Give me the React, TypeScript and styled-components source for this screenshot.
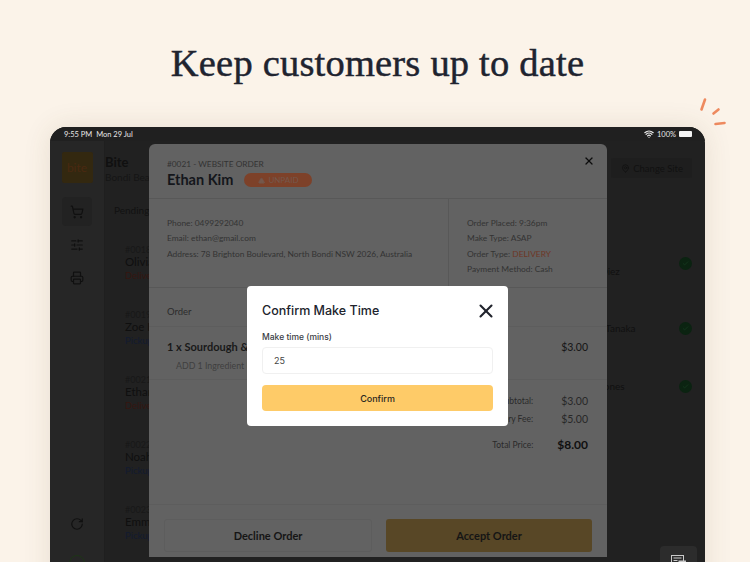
import React from 'react';
import styled, { createGlobalStyle } from 'styled-components';
import { Check, MapPin, Printer, RotateCw, ShoppingCart, SlidersHorizontal, TriangleAlert, Wifi, X } from 'lucide-react';

const GlobalStyle = createGlobalStyle`
	html, body {
		margin: 0;
		height: 100%;
		overflow: hidden;
		background: #fbf3e9;
	}
	* {
		box-sizing: border-box;
	}
`;

const pendingOrders = [
	{ id: '#0018', name: 'Olivia Hart', type: 'Delivery' },
	{ id: '#0019', name: 'Zoe Lang', type: 'Pickup' },
	{ id: '#0021', name: 'Ethan Kim', type: 'Delivery' },
	{ id: '#0022', name: 'Noah Reed', type: 'Pickup' },
	{ id: '#0023', name: 'Emma Cole', type: 'Pickup' },
];

const doneOrders = ['Mia Diez', 'Kenji Tanaka', 'Ava Jones'];

const App: React.FC = () => {
	return (
		<Page>
			<GlobalStyle />
			<Headline>Keep customers up to date</Headline>
			<Sparks width='30' height='32' viewBox='0 0 30 32'>
				<path d='M3.5 12.5 L7 2.5' />
				<path d='M15.5 16.5 L20.5 12.5' />
				<path d='M17.5 27 L26.5 26' />
			</Sparks>
			<Tablet>
				<StatusBar>
					<span>9:55 PM&nbsp;&nbsp;Mon 29 Jul</span>
					<StatusRight>
						<Wifi size={10} strokeWidth={3} />
						<span>100%</span>
						<Battery />
					</StatusRight>
				</StatusBar>
				<AppBody>
					<Sidebar>
						<Logo>bite</Logo>
						<SideButton $active>
							<ShoppingCart size={14} />
						</SideButton>
						<SideButton>
							<SlidersHorizontal size={14} />
						</SideButton>
						<SideButton>
							<Printer size={14} />
						</SideButton>
						<SideSpacer />
						<SideButton>
							<RotateCw size={14} />
						</SideButton>
						<GreenRing />
					</Sidebar>
					<Main>
						<TopBar>
							<div>
								<SiteName>Bite</SiteName>
								<SiteArea>Bondi Beach</SiteArea>
							</div>
							<ChangeSite>
								<MapPin size={9} />
								Change Site
							</ChangeSite>
						</TopBar>
						<Tab>Pending</Tab>
						<Columns>
							<OrderList>
								{pendingOrders.map((order) => (
									<OrderRow key={order.id}>
										<OrderId>{order.id}</OrderId>
										<OrderName>{order.name}</OrderName>
										<OrderType $delivery={order.type === 'Delivery'}>{order.type}</OrderType>
									</OrderRow>
								))}
							</OrderList>
							<DoneList>
								{doneOrders.map((name, index) => (
									<DoneRow key={name} $low={index === 0}>
										<span>{name}</span>
										<DoneMark>
											<Check size={7} />
										</DoneMark>
									</DoneRow>
								))}
							</DoneList>
						</Columns>
					</Main>
				</AppBody>
				<BottomBand />
				<Sheet>
					<SheetHeader>
						<SheetKicker>#0021 - WEBSITE ORDER</SheetKicker>
						<SheetTitleRow>
							<SheetTitle>Ethan Kim</SheetTitle>
							<UnpaidBadge>
								<TriangleAlert size={7} fill='#75584c' />
								UNPAID
							</UnpaidBadge>
						</SheetTitleRow>
						<SheetClose>
							<X size={12} strokeWidth={2.5} />
						</SheetClose>
					</SheetHeader>
					<InfoGrid>
						<InfoColumn>
							<InfoLine>Phone: 0499292040</InfoLine>
							<InfoLine>Email: ethan@gmail.com</InfoLine>
							<InfoLine>Address: 78 Brighton Boulevard, North Bondi NSW 2026, Australia</InfoLine>
						</InfoColumn>
						<InfoColumn>
							<InfoLine>Order Placed: 9:36pm</InfoLine>
							<InfoLine>Make Type: ASAP</InfoLine>
							<InfoLine>
								Order Type: <DeliveryText>DELIVERY</DeliveryText>
							</InfoLine>
							<InfoLine>Payment Method: Cash</InfoLine>
						</InfoColumn>
					</InfoGrid>
					<OrderHeading>Order</OrderHeading>
					<ItemBlock>
						<ItemRow>
							<ItemName>1 x Sourdough &amp; Avocado</ItemName>
							<Price>$3.00</Price>
						</ItemRow>
						<ItemExtra>ADD 1 Ingredient Egg</ItemExtra>
					</ItemBlock>
					<Totals>
						<TotalRow>
							<TotalLabel>Subtotal:</TotalLabel>
							<TotalValue>$3.00</TotalValue>
						</TotalRow>
						<TotalRow>
							<TotalLabel>Delivery Fee:</TotalLabel>
							<TotalValue>$5.00</TotalValue>
						</TotalRow>
						<GrandRow>
							<TotalLabel>Total Price:</TotalLabel>
							<GrandValue>$8.00</GrandValue>
						</GrandRow>
					</Totals>
					<SheetFooter>
						<DeclineButton>Decline Order</DeclineButton>
						<AcceptButton>Accept Order</AcceptButton>
					</SheetFooter>
				</Sheet>
				<Dialog>
					<DialogHeader>
						<DialogTitle>Confirm Make Time</DialogTitle>
						<X size={22} strokeWidth={2.3} color='#20232c' />
					</DialogHeader>
					<FieldLabel>Make time (mins)</FieldLabel>
					<Field>25</Field>
					<ConfirmButton>Confirm</ConfirmButton>
				</Dialog>
				<SupportButton>
					<svg width='15' height='12' viewBox='0 0 15 12' fill='none' stroke='#c9c9c9' strokeWidth='1'>
						<rect x='0.5' y='0.5' width='12' height='10' />
						<path d='M2.5 3h8M2.5 5.5h4M2.5 8h4' />
						<rect x='8' y='6' width='6.5' height='5.5' fill='#c9c9c9' />
					</svg>
				</SupportButton>
			</Tablet>
		</Page>
	);
};

const Page = styled.div`
	position: relative;
	width: 750px;
	height: 562px;
	overflow: hidden;
	padding: 41px 45px 0 50px;
	background: #fbf3e9;
`;

const Headline = styled.h1`
	margin: 0 0 41px;
	height: 45px;
	font-family: 'Liberation Serif', serif;
	font-size: 38.5px;
	line-height: 45px;
	font-weight: 400;
	letter-spacing: 0.2px;
	text-align: center;
	color: #20232f;
	-webkit-text-stroke: 0.45px #20232f;
`;

const Sparks = styled.svg`
	position: absolute;
	left: 698px;
	top: 97px;
	fill: none;
	stroke: #ee8a5f;
	stroke-width: 2.6;
	stroke-linecap: round;
`;

const Tablet = styled.div`
	position: relative;
	height: 470px;
	border-radius: 16px 16px 0 0;
	overflow: hidden;
	background: #212121;
	box-shadow: 0 0 28px rgba(90, 70, 40, 0.12);
	font-family: Lato, 'Liberation Sans', sans-serif;
`;

const StatusBar = styled.div`
	display: flex;
	align-items: center;
	justify-content: space-between;
	height: 14px;
	padding: 0 13px 0 14px;
	background: #202020;
	font-size: 7.5px;
	color: #e6e6e6;
`;

const StatusRight = styled.div`
	display: flex;
	align-items: center;
	gap: 3px;
`;

const Battery = styled.div`
	width: 13px;
	height: 6px;
	border-radius: 1px;
	background: #f4f4f4;
`;

const AppBody = styled.div`
	display: flex;
	height: 430px;
`;

const Sidebar = styled.div`
	display: flex;
	flex: none;
	flex-direction: column;
	align-items: center;
	width: 55px;
	padding: 11px 0 0;
	background: #262626;
	border-right: 1px solid #1f1f1f;
`;

const Logo = styled.div`
	display: flex;
	align-items: center;
	justify-content: center;
	width: 31px;
	height: 31px;
	margin-bottom: 14px;
	border-radius: 2px;
	background: #332810;
	font-size: 12px;
	color: #4a2810;
`;

const SideButton = styled.div<{ $active?: boolean }>`
	display: flex;
	align-items: center;
	justify-content: center;
	width: 30px;
	height: 29px;
	margin-bottom: 4px;
	border-radius: 4px;
	background: ${({ $active }) => ($active ? '#222' : 'transparent')};
	color: #101010;
`;

const SideSpacer = styled.div`
	flex: 1;
`;

const GreenRing = styled.div`
	flex: none;
	width: 16px;
	height: 16px;
	margin-top: 13px;
	border: 1px solid #1e3517;
	border-radius: 50%;
`;

const Main = styled.div`
	flex: 1;
	min-width: 0;
	overflow: hidden;
`;

const TopBar = styled.div`
	display: flex;
	align-items: flex-start;
	justify-content: space-between;
	height: 56px;
	padding: 14px 13px 0 0;
`;

const SiteName = styled.div`
	font-size: 13px;
	font-weight: 700;
	line-height: 15px;
	color: #101010;
`;

const SiteArea = styled.div`
	font-size: 10px;
	line-height: 14px;
	color: #151515;
`;

const ChangeSite = styled.div`
	display: flex;
	align-items: center;
	gap: 3px;
	height: 20px;
	margin-top: 3px;
	padding: 0 9px 0 10px;
	border-radius: 3px;
	background: #1e1e1e;
	font-size: 9.5px;
	color: #111;
`;

const Tab = styled.div`
	height: 39px;
	padding: 7px 9px;
	font-size: 10px;
	color: #111;
`;

const Columns = styled.div`
	display: flex;
	justify-content: space-between;
	padding: 8px 13px 0 20px;
`;

const OrderList = styled.div`
	display: flex;
	flex-direction: column;
	gap: 26px;
`;

const OrderRow = styled.div`
	height: 39px;
`;

const OrderId = styled.div`
	font-size: 9px;
	line-height: 12px;
	color: #181818;
`;

const OrderName = styled.div`
	font-size: 11.5px;
	line-height: 12px;
	color: #0f0f0f;
`;

const OrderType = styled.div<{ $delivery: boolean }>`
	font-size: 9.5px;
	line-height: 15px;
	color: ${({ $delivery }) => ($delivery ? '#351610' : '#121b30')};
`;

const DoneList = styled.div`
	display: flex;
	flex-direction: column;
	gap: 44px;
	width: 111px;
	padding-top: 13px;
`;

const DoneRow = styled.div<{ $low: boolean }>`
	display: flex;
	align-items: ${({ $low }) => ($low ? 'flex-end' : 'center')};
	justify-content: space-between;
	height: ${({ $low }) => ($low ? '20px' : '14px')};
	font-size: 10px;
	color: #101010;

	& > div {
		align-self: ${({ $low }) => ($low ? 'flex-start' : 'center')};
	}
`;

const DoneMark = styled.div`
	display: flex;
	align-items: center;
	justify-content: center;
	width: 13px;
	height: 13px;
	border-radius: 50%;
	background: #0b2311;
	color: #1c4326;
`;

const BottomBand = styled.div`
	height: 26px;
	background: #333;
`;

const Sheet = styled.div`
	position: absolute;
	left: 99px;
	top: 17px;
	display: flex;
	flex-direction: column;
	width: 458px;
	height: 413px;
	border-radius: 6px 6px 0 0;
	background: #626262;
	color: #363636;
`;

const SheetHeader = styled.div`
	position: relative;
	height: 55px;
	padding: 15px 18px 0;
	border-bottom: 1px solid #585858;
`;

const SheetKicker = styled.div`
	font-size: 8.3px;
	line-height: 11px;
	color: #333;
`;

const SheetTitleRow = styled.div`
	display: flex;
	align-items: center;
	gap: 11px;
	margin-top: 2px;
`;

const SheetTitle = styled.div`
	font-size: 14.5px;
	line-height: 16px;
	font-weight: 700;
	color: #14161b;
`;

const UnpaidBadge = styled.div`
	display: flex;
	align-items: center;
	justify-content: center;
	gap: 3px;
	width: 68px;
	height: 14px;
	border-radius: 7px;
	background: #7d4129;
	font-size: 8px;
	color: #75584c;
`;

const SheetClose = styled.div`
	position: absolute;
	top: 11px;
	right: 12px;
	display: flex;
	color: #0c0c0c;
`;

const InfoGrid = styled.div`
	display: grid;
	grid-template-columns: 299px 1fr;
	height: 89px;
	border-bottom: 1px solid #585858;
`;

const InfoColumn = styled.div`
	display: flex;
	flex-direction: column;
	padding: 17px 18px 0;
	& + & {
		border-left: 1px solid #585858;
	}
`;

const InfoLine = styled.div`
	font-size: 8.4px;
	line-height: 15.3px;
	white-space: nowrap;
	color: #333;
`;

const DeliveryText = styled.span`
	color: #6e3626;
`;

const OrderHeading = styled.div`
	height: 39px;
	padding: 18px 18px 0;
	border-bottom: 1px solid #5d5d5d;
	font-size: 9.5px;
	color: #2c2c2c;
`;

const ItemBlock = styled.div`
	height: 53px;
	padding: 13px 19px 0 18px;
	border-bottom: 1px solid #5d5d5d;
`;

const ItemRow = styled.div`
	display: flex;
	justify-content: space-between;
	align-items: center;
`;

const ItemName = styled.div`
	font-size: 11px;
	line-height: 14px;
	font-weight: 700;
	color: #191919;
`;

const Price = styled.div`
	font-size: 10.5px;
	font-weight: 500;
	color: #191919;
`;

const ItemExtra = styled.div`
	margin: 6px 0 0 9px;
	font-size: 8.8px;
	color: #3f3f3f;
`;

const Totals = styled.div`
	display: flex;
	flex: 1;
	flex-direction: column;
	gap: 5px;
	padding: 14px 19px 0 0;
	border-bottom: 1px solid #5d5d5d;
`;

const TotalRow = styled.div`
	display: flex;
	align-items: center;
	justify-content: flex-end;
	height: 13px;
	gap: 28px;
`;

const GrandRow = styled(TotalRow)`
	height: 17px;
	margin-top: 6px;
	gap: 24px;
`;

const TotalLabel = styled.div`
	font-size: 8.5px;
	color: #2a2a2a;
`;

const TotalValue = styled.div`
	font-size: 10.5px;
	color: #282828;
`;

const GrandValue = styled.div`
	font-size: 12px;
	font-weight: 700;
	color: #101010;
`;

const SheetFooter = styled.div`
	display: flex;
	gap: 14px;
	height: 52px;
	padding: 14px 15px 0;
`;

const DeclineButton = styled.div`
	display: flex;
	flex: 1;
	align-items: center;
	justify-content: center;
	height: 33px;
	border: 1px solid #5d5d5d;
	border-radius: 3px;
	font-size: 11px;
	font-weight: 700;
	color: #151515;
`;

const AcceptButton = styled(DeclineButton)`
	border: 0;
	background: #584726;
`;

const Dialog = styled.div`
	position: absolute;
	left: 197px;
	top: 159px;
	width: 261px;
	height: 140px;
	padding: 15px 15px 0;
	border-radius: 4px;
	background: #fff;
	font-family: Inter, 'Liberation Sans', sans-serif;
`;

const DialogHeader = styled.div`
	display: flex;
	align-items: center;
	justify-content: space-between;
	height: 19px;
	margin-bottom: 11px;
	margin-right: -4px;
`;

const DialogTitle = styled.div`
	font-size: 12.5px;
	font-weight: 500;
	color: #20232c;
`;

const FieldLabel = styled.div`
	margin-bottom: 4px;
	font-size: 8.5px;
	line-height: 12px;
	font-weight: 500;
	color: #3a3d45;
`;

const Field = styled.div`
	display: flex;
	align-items: center;
	height: 27px;
	margin-bottom: 11px;
	padding: 0 11px;
	border: 1px solid #f0f0f0;
	border-radius: 4px;
	font-size: 9px;
	color: #444;
`;

const ConfirmButton = styled.div`
	display: flex;
	align-items: center;
	justify-content: center;
	height: 26px;
	border-radius: 4px;
	background: #fecb68;
	font-size: 9px;
	font-weight: 500;
	color: #2a2620;
`;

const SupportButton = styled.div`
	position: absolute;
	left: 610px;
	top: 419px;
	display: flex;
	justify-content: center;
	width: 37px;
	height: 40px;
	padding-top: 9px;
	border-radius: 4px 4px 0 0;
	background: #2c2c2c;
`;

export default App;
